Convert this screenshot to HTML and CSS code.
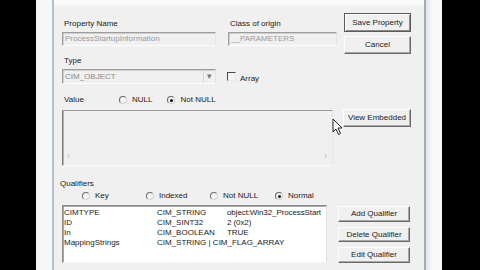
FILE: index.html
```html
<!DOCTYPE html>
<html lang="en">
<head>
    <meta charset="UTF-8">
    <title>Property Editor</title>
    <link rel="stylesheet" href="styles.css">
</head>
<body>
    <div class="screen">
        <div class="edge-left"></div>
        <div class="dialog">
            <div class="top">
                <div class="field name">
                    <div class="label">Property Name</div>
                    <div class="box">ProcessStartupInformation</div>
                </div>
                <div class="field origin">
                    <div class="label">Class of origin</div>
                    <div class="box">__PARAMETERS</div>
                </div>
                <div class="side">
                    <div class="btn default save">Save Property</div>
                    <div class="btn cancel">Cancel</div>
                </div>
            </div>

            <div class="label type-label">Type</div>
            <div class="type-row">
                <div class="box combo">
                    <span>CIM_OBJECT</span>
                    <span class="drop">&#9662;</span>
                </div>
                <span class="check"></span>
                <span class="check-text">Array</span>
            </div>

            <div class="value-row">
                <div class="label value-label">Value</div>
                <span class="radio"></span><span class="radio-text">NULL</span>
                <span class="radio on not-null"></span><span class="radio-text">Not NULL</span>
            </div>
            <div class="value-area">
                <div class="textarea">
                    <div class="hscroll"><span>&lsaquo;</span><span>&rsaquo;</span></div>
                </div>
                <div class="btn embedded">View Embedded</div>
            </div>

            <div class="label qual-label">Qualifiers</div>
            <div class="qual-radios">
                <span class="radio key"></span><span class="radio-text w-key">Key</span>
                <span class="radio"></span><span class="radio-text w-idx">Indexed</span>
                <span class="radio"></span><span class="radio-text w-nn">Not NULL</span>
                <span class="radio on"></span><span class="radio-text">Normal</span>
            </div>
            <div class="qual-area">
                <div class="list">
                    <div class="row"><span class="c1">CIMTYPE</span><span class="c2">CIM_STRING</span><span class="c3">object:Win32_ProcessStart</span></div>
                    <div class="row"><span class="c1">ID</span><span class="c2">CIM_SINT32</span><span class="c3">2 (0x2)</span></div>
                    <div class="row"><span class="c1">In</span><span class="c2">CIM_BOOLEAN</span><span class="c3">TRUE</span></div>
                    <div class="row"><span class="c1">MappingStrings</span><span class="c2 wide">CIM_STRING | CIM_FLAG_ARRAY</span></div>
                </div>
                <div class="qual-btns">
                    <div class="btn add">Add Qualifier</div>
                    <div class="btn del">Delete Qualifier</div>
                    <div class="btn edit">Edit Qualifier</div>
                </div>
            </div>

            <svg class="cursor" width="12" height="18" viewBox="0 0 12 18">
                <path d="M1 1 L1 14 L4 11 L6.5 16.5 L8.5 15.5 L6 10 L10 10 Z" fill="#fff" stroke="#222" stroke-width="1"/>
            </svg>
        </div>
        <div class="edge-right"></div>
    </div>
</body>
</html>
```

FILE: styles.css
```css
body {
    margin: 0;
    background-color: #000;
    font-family: "Liberation Sans", Arial, sans-serif;
    font-size: 8px;
    color: #1a1a1a;
}
.screen {
    display: flex;
    height: 270px;
    margin-left: 36px;
    width: 406px;
    overflow: hidden;
}
.edge-left {
    width: 16px;
    background: #f6f7f9;
    border-right: 2px solid #b3c0cf;
}
.edge-right {
    width: 16px;
    background: linear-gradient(to right, #dfe3e8, #f7f8fa 40%, #fafafa);
    border-left: 2px solid #a3acb8;
}
.dialog {
    position: relative;
    width: 362px;
    padding-left: 8px;
    background: linear-gradient(#f9f9f9 0, #f9f9f9 5px, #f0f0f0 6px);
}
.label {
    height: 10px;
    line-height: 10px;
    padding-left: 2px;
    white-space: nowrap;
}
.box {
    box-sizing: border-box;
    height: 14px;
    line-height: 12px;
    padding-left: 2px;
    color: #9a9a9a;
    background: #f0f0f0;
    border: 1px solid;
    border-color: #9d9d9d #e4e4e4 #fdfdfd #9d9d9d;
    box-shadow: inset 1px 1px 0 #cfcfcf;
    white-space: nowrap;
    overflow: hidden;
}
.btn {
    box-sizing: border-box;
    text-align: center;
    background: #f0f0f0;
    border: 1px solid;
    border-color: #fdfdfd #6a6a6a #6a6a6a #fdfdfd;
    box-shadow: inset -1px -1px 0 #a8a8a8;
    white-space: nowrap;
}
.btn.default {
    border-color: #5a5a5a;
    box-shadow: inset 1px 1px 0 #fff, inset -1px -1px 0 #8a8a8a;
}

/* top row */
.top {
    display: flex;
    align-items: flex-start;
}
.field {
    margin-top: 19px;
}
.field .box {
    margin-top: 3px;
}
.field.name {
    width: 154px;
}
.field.origin {
    width: 109px;
    margin-left: 12px;
}
.side {
    margin-left: 7px;
    margin-top: 13px;
}
.save {
    width: 67px;
    height: 19px;
    line-height: 17px;
}
.cancel {
    width: 67px;
    height: 18px;
    line-height: 16px;
    margin-top: 4px;
}

/* type */
.type-label {
    margin-top: 2px;
}
.type-row {
    display: flex;
    align-items: center;
    margin-top: 3px;
}
.combo {
    width: 154px;
    height: 15px;
    display: flex;
    justify-content: space-between;
    line-height: 13px;
    color: #8a8a8a;
}
.drop {
    width: 11px;
    text-align: center;
    color: #777;
    border-left: 1px solid #d8d8d8;
    font-size: 9px;
}
.check {
    width: 9px;
    height: 9px;
    margin-left: 11px;
    box-sizing: border-box;
    border: 1px solid;
    border-color: #4a4a4a #e8e8e8 #e8e8e8 #4a4a4a;
    background: #f3f3f3;
}
.check-text {
    margin-left: 4px;
    margin-top: 3px;
}

/* radios */
.radio {
    position: relative;
    display: inline-block;
    box-sizing: border-box;
    width: 8px;
    height: 8px;
    border-radius: 50%;
    border: 1px solid;
    border-color: #6a6a6a #d2d2d2 #d2d2d2 #6a6a6a;
    background: #f5f5f5;
    flex: none;
}
.radio.on::after {
    content: "";
    position: absolute;
    left: 1.5px;
    top: 1.5px;
    width: 3px;
    height: 3px;
    border-radius: 50%;
    background: #111;
}
.radio-text {
    margin-left: 5px;
    line-height: 10px;
}

/* value */
.value-row {
    display: flex;
    align-items: center;
    margin-top: 11px;
    height: 10px;
}
.value-label {
    width: 55px;
}
.not-null {
    margin-left: 15px;
}
.value-area {
    display: flex;
    align-items: flex-start;
    margin-top: 5px;
}
.textarea {
    box-sizing: border-box;
    width: 271px;
    height: 56px;
    display: flex;
    flex-direction: column;
    background: #f0f0f0;
    border: 1px solid;
    border-color: #9a9a9a #e6e6e6 #fafafa #7a7a7a;
    box-shadow: inset 1px 0 0 #b5b5b5;
}
.hscroll {
    margin-top: auto;
    margin-bottom: 4px;
    display: flex;
    justify-content: space-between;
    padding: 0 5px 0 4px;
    color: #b0b0b0;
    font-size: 9px;
    line-height: 10px;
}
.embedded {
    width: 68px;
    height: 18px;
    line-height: 16px;
    margin-left: 10px;
    margin-top: -1px;
}

/* qualifiers */
.qual-label {
    margin-top: 13px;
    margin-left: -4px;
}
.qual-radios {
    display: flex;
    align-items: center;
    height: 10px;
    margin-top: 2px;
    padding-left: 20px;
}
.w-key {
    width: 51px;
}
.w-idx {
    width: 51px;
}
.w-nn {
    width: 52px;
}
.qual-area {
    display: flex;
    align-items: flex-start;
    margin-top: 4px;
}
.list {
    box-sizing: border-box;
    width: 265px;
    height: 58px;
    padding: 2px 0 0 1px;
    background: #fff;
    border: 1px solid;
    border-color: #8a8a8a #e2e2e2 #f4f4f4 #8a8a8a;
    box-shadow: inset 1px 1px 0 #a8a8a8;
    overflow: hidden;
}
.row {
    display: flex;
    height: 10px;
    line-height: 10px;
    white-space: nowrap;
}
.c1 {
    width: 93px;
    flex: none;
}
.c2 {
    width: 70px;
    flex: none;
}
.c2.wide {
    width: auto;
}
.c3 {
    letter-spacing: -0.1px;
}
.qual-btns {
    margin-left: 11px;
    margin-top: 1px;
}
.qual-btns .btn {
    width: 72px;
    height: 16px;
    line-height: 14px;
}
.qual-btns .del {
    height: 15px;
    line-height: 13px;
    margin-top: 5px;
}
.qual-btns .edit {
    margin-top: 5px;
}
.cursor {
    position: absolute;
    left: 278px;
    top: 118px;
}
```
